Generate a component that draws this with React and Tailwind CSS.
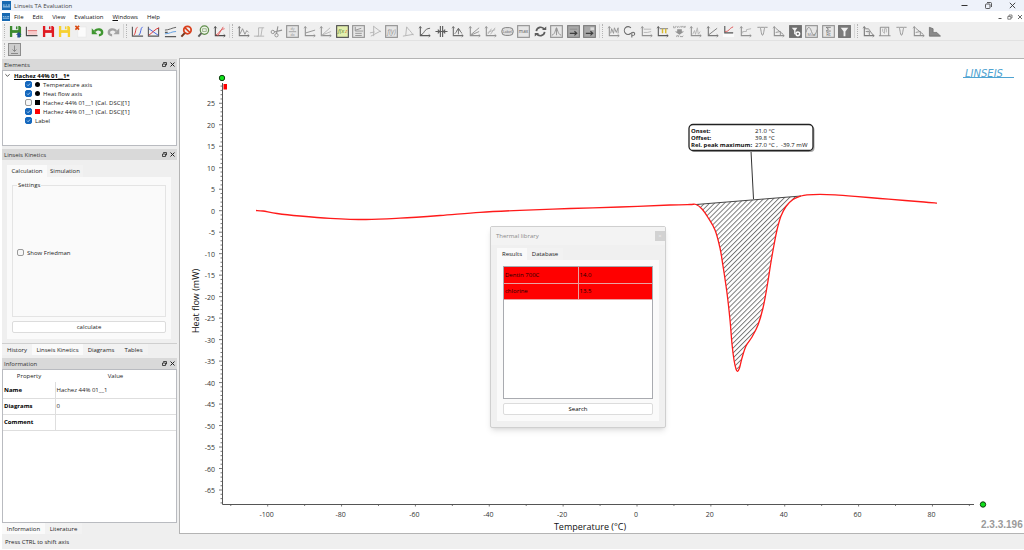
import { useState } from "react";
import { clsx } from "clsx";

/* ---------- toolbar icons (14 x 14) ---------- */

const GREY = "#929292";
const LIGHT = "#b4b4b4";
const DARK = "#5c5c5c";

function Axes({ color = GREY }) {
  return (
    <>
      <path d="M2.5 2v9.5H13" stroke={color} strokeWidth="1.2" />
      <path d="M1 3.5 2.5 1.5 4 3.5M11.5 10 13.2 11.5 11.5 13" stroke={color} strokeWidth="0.8" />
    </>
  );
}

function Floppy({ color, arrow }) {
  return (
    <>
      <path d="M1 1h10.500L13 2.500V13H1z" fill={color} />
      <path d="M3.500 1h6.500v4.500H3.500z" fill="#e9eef0" />
      <path d="M7.500 1.500h1.600v3H7.500z" fill={color} />
      <path d="M3.500 8.500h7V13h-7z" fill="#f3f3f3" />
      {arrow && <path d="M10.500 7.500 13.500 10.500H12v3H9v-3H7.500z" fill="#27508f" />}
    </>
  );
}

function Framed({ fill = "#e6e6e6", stroke = GREY, children }) {
  return (
    <>
      <rect x="0.700" y="0.700" width="12.600" height="12.600" fill={fill} stroke={stroke} strokeWidth="1.200" />
      {children}
    </>
  );
}

function IconText({ x = 7, y = 9, size = 6, fill = GREY, italic, children }) {
  return (
    <text
      x={x}
      y={y}
      fontSize={size}
      fill={fill}
      fontStyle={italic ? "italic" : "normal"}
      textAnchor="middle"
      stroke="none"
    >
      {children}
    </text>
  );
}

const fileIcons = [
  ["Save project", <Floppy color="#3c8a2e" arrow />],
  [
    "Open curve",
    <>
      <path d="M3 6h10v4.500H3z" fill="#f6c9c9" />
      <path d="M3 6h10" stroke="#e07070" />
      <path d="M1.500 2v9.500H13.500" stroke="#4a4a4a" strokeWidth="1.200" />
    </>,
  ],
  ["Save", <Floppy color="#e01b22" />],
  ["Save as", <Floppy color="#f7d030" />],
  [
    "Close file",
    <>
      <path d="M4 2h9v11H4z" fill="#fbfbfb" stroke="#e4e4e4" strokeWidth="0.600" />
      <path d="M1.500 1 5.500 5M5.500 1 1.500 5" stroke="#d9480f" strokeWidth="1.700" />
    </>,
  ],
  [
    "Undo",
    <>
      <path d="M4 6.500C7 3.500 12 4.500 12 8c0 1.800-1.500 3-3.500 3" stroke="#3f9630" strokeWidth="2.600" />
      <path d="M.8 3.500v6.500h6.200z" fill="#3f9630" />
    </>,
  ],
  [
    "Redo",
    <>
      <path d="M10 6.500C7 3.500 2 4.500 2 8c0 1.800 1.500 3 3.500 3" stroke="#a3a3a3" strokeWidth="2.600" />
      <path d="M13.200 3.500v6.500H7z" fill="#a3a3a3" />
    </>,
  ],
];

const viewIcons = [
  [
    "Curves",
    <>
      <path d="M1.500 2v10H13" stroke="#5a5a5a" strokeWidth="1.200" />
      <path d="M3 11C5.500 9 4.500 3 7 2.500" stroke="#e03030" />
      <path d="M8.500 11C11 9 10 3 12.500 2" stroke="#4060e0" />
    </>,
  ],
  [
    "Crossing curves",
    <>
      <path d="M1.500 2v10h11V3" stroke="#5a5a5a" strokeWidth="1.200" />
      <path d="M2 4 12 11" stroke="#4060e0" />
      <path d="M2 11C5 9 9 4 13 3" stroke="#e03030" />
    </>,
  ],
  [
    "Stacked curves",
    <>
      <path d="M1 12.500h12M1 8h3" stroke="#5a5a5a" strokeWidth="1.200" />
      <path d="M1 5.500C5 5.500 9 3 13 2.500" stroke="#5a5a5a" />
      <path d="M1 9.500C6 9.500 8 7 13 7" stroke="#5b9bdf" />
    </>,
  ],
  [
    "Disable zoom",
    <>
      <circle cx="8" cy="5.500" r="4" stroke="#d9411e" strokeWidth="1.900" />
      <path d="M5.200 2.800 10.800 8.200" stroke="#d9411e" strokeWidth="1.700" />
      <path d="M5 8.700 1.500 12.500" stroke="#77371f" strokeWidth="2.200" />
    </>,
  ],
  [
    "Zoom fit",
    <>
      <circle cx="8" cy="5.500" r="4.500" fill="#edf4e7" stroke="#5f8d4a" strokeWidth="1.300" />
      <path d="M6 4h4v3H6z" stroke="#7a9b6b" strokeWidth="0.700" />
      <path d="M4.800 8.700 1.500 12.500" stroke="#5c5c5c" strokeWidth="2" />
    </>,
  ],
  [
    "Tangent",
    <>
      <Axes color="#4a4a4a" />
      <path d="M3 10.500C7 10 6 5 12.500 4M5 12 11 2" stroke="#e05050" strokeWidth="0.900" />
    </>,
  ],
];

const evaluationIcons = [
  ["Peak", <><Axes color="#7a7a7a" /><path d="M3 10 6 4l2.500 6 2-4 2 2" stroke={GREY} /></>],
  ["Step", <path d="M1 12h5V3h6M4 12h8M10 3 8.500 12" stroke={LIGHT} />],
  [
    "Cut",
    <>
      <circle cx="3" cy="7.500" r="1.800" stroke={GREY} />
      <circle cx="7" cy="11" r="1.800" stroke={GREY} />
      <path d="M4.500 7.500 13 5.500M7 9.500 8.500 1.500" stroke={GREY} strokeWidth="1.200" />
    </>,
  ],
  [
    "Derivative",
    <Framed>
      <IconText y={5.500} size={4}>dy</IconText>
      <path d="M3 7.200h8" stroke={GREY} strokeWidth="0.800" />
      <IconText y={12} size={4}>dx</IconText>
    </Framed>,
  ],
  ["Baseline", <><Axes /><path d="M3 8.500 13 5.500" stroke={GREY} /></>],
  ["Slope", <><Axes /><path d="M3 11 12 3M3 11 13 7" stroke={LIGHT} /></>],
  [
    "Function",
    <Framed fill="#e3efae" stroke="#4d4d4d">
      <IconText x={5.500} size={6} fill="#4c7a2a" italic>f(x</IconText>
      <IconText x={11} size={6} fill="#e07a30" italic>z</IconText>
    </Framed>,
  ],
  [
    "Report",
    <Framed>
      <path d="M3.500 2v4.500H12M4 5.500l6-2M3.500 9h7M3.500 11.300h7" stroke={GREY} />
    </Framed>,
  ],
  ["Onset", <path d="M5 1v11M2 12 12.500 6.500M5 1.500l8 6M1 8.500 6 7.500" stroke={LIGHT} />],
  ["Formula", <Framed><IconText size={7} y={9.500} italic>f(y)</IconText></Framed>],
  ["Offset", <path d="M1 12 12.500 10M5 2 4 11.500M5 2c2 3 5 5 7 9" stroke={LIGHT} />],
  ["Glass point", <><Axes color={DARK} /><path d="M3 10.500C7 10 6 4 13 3.500" stroke={DARK} /></>],
  [
    "Shift",
    <>
      <path d="M5.800 1v12M8.200 1v12" stroke={DARK} strokeWidth="1.200" />
      <path d="M.5 7h13M3 5 5 7 3 9M11 5 9 7l2 2" stroke={DARK} strokeWidth="1.300" />
    </>,
  ],
  ["Raise", <><Axes color="#6e6e6e" /><path d="M4 9.500C6 8 7 4 8 4s2 4 4 5M8 10V4M6.500 6 8 3.500 9.500 6" stroke="#6e6e6e" /></>],
  ["Line fit", <><Axes /><path d="M3 10.500 12 3M3 11l9-4" stroke={GREY} /></>],
  ["Parallel", <><Axes /><path d="M4 10 8 4M7 10l5-7M4 8l8-3" stroke={LIGHT} /></>],
  [
    "Label",
    <>
      <rect x="0.800" y="2.800" width="12.400" height="8.400" rx="4" stroke="#7c7c7c" fill="#dedede" />
      <IconText y={8.800} size={4} fill="#666">Label</IconText>
    </>,
  ],
  ["Maximum", <Framed><IconText size={5} y={9} fill="#555">max</IconText></Framed>],
  [
    "Refresh",
    <>
      <path d="M2.500 6.500a4.700 4.700 0 0 1 8.700-1.700M11.500 7.500a4.700 4.700 0 0 1-8.700 1.700" stroke={DARK} strokeWidth="1.800" />
      <path d="M8.500 5.500h4.700V1.500zM5.500 8.500H.8v4z" fill={DARK} />
    </>,
  ],
  ["Distribution", <Framed><path d="M2 11C6 10 6 3 7 3s1 7 5 8M7 3v8" stroke={GREY} /></Framed>],
  [
    "Export",
    <Framed fill="#a9a9a9" stroke="#7b7b7b">
      <path d="M3 4.500h8" stroke="#8a8a8a" />
      <path d="M3 9h7M8 6.800 10.500 9 8 11.200" stroke="#3f3f3f" strokeWidth="1.300" />
    </Framed>,
  ],
  [
    "Export all",
    <Framed fill="#a9a9a9" stroke="#7b7b7b">
      <path d="M8 2.500h4v3H8z" fill="#dcdcdc" />
      <path d="M3 9h7M8 6.800 10.500 9 8 11.200" stroke="#3f3f3f" strokeWidth="1.300" />
    </Framed>,
  ],
];

const dscIcons = [
  ["Compare", <><Axes /><path d="M4 9l1-5 2 5 1-6 2 5 2-5v6" stroke={GREY} /></>],
  [
    "Heat capacity",
    <>
      <path d="M8.500 3.200A4 4.300 0 1 0 8.500 8.800" stroke="#6b6b6b" strokeWidth="1.200" />
      <path d="M9.500 13.500V7.500M9.500 8.200c3.500-1.500 4.500 3.300.5 3.300" stroke="#6b6b6b" strokeWidth="1.100" />
    </>,
  ],
  ["Plateau", <><Axes /><path d="M4 4.500h8M4 8h4l4-1" stroke={LIGHT} /></>],
  [
    "Marker",
    <>
      <Axes color={DARK} />
      <path d="M4 4h9" stroke="#7a7a7a" />
      <path d="M7 9V4M10.500 4v5" stroke="#d8b92b" strokeWidth="1.500" />
    </>,
  ],
  [
    "Convert to mW",
    <>
      <path d="M0.500 1v2h2V1M4 1l1 2 1-2M7 3l1-2M9 3V1.500h2V3M12 1l.700 2 .800-2" stroke={GREY} strokeWidth="0.700" />
      <path d="M4.500 4.500h5v2.500H12L7 10.500 2 7h2.500z" fill={GREY} />
      <path d="M4 13v-1.500h2V13M7.500 11.500l1 1.500.700-1 .700 1 1-1.500" stroke={GREY} strokeWidth="0.800" />
    </>,
  ],
  ["Peaks", <><Axes /><path d="M4 10l2-4 1 4 2-7 1 7 2-3" stroke={LIGHT} /></>],
  ["Rise", <><Axes color="#7a7a7a" /><path d="M3 10.500 12 3.500" stroke="#7a7a7a" /></>],
  [
    "Curve correction",
    <>
      <path d="M1 9h12v4H1z" fill="#fafafa" />
      <path d="M3 1v7.500h9" stroke="#555" strokeWidth="1.200" />
      <path d="M3.500 7C8 7 7 4 12 2" stroke="#e04848" />
    </>,
  ],
  ["Steps", <><Axes /><path d="M4 9V7h4V5l5-1" stroke={LIGHT} /></>],
  ["Valley", <path d="M1.500 2.500h2.500c1.500 0 1.500 8.500 3 8.500s1.500-8.500 3-8.500h2.500M4.500 2.500h5" stroke={GREY} />],
  ["Decay", <><Axes /><path d="M4 3.500 12 10M4 8l5-1v4" stroke={GREY} /></>],
  [
    "Filter settings",
    <Framed fill="#6f6f6f" stroke="#6f6f6f">
      <path d="M3 3h6L7 6v4H5.500V6z" fill="#f0f0f0" />
      <circle cx="9.500" cy="9.500" r="2" stroke="#fff" strokeWidth="1.500" />
    </Framed>,
  ],
  [
    "Modulation",
    <Framed>
      <path d="M1 8C3 1 5 1 7 7s4 5 6-2" stroke={GREY} />
      <IconText y={12.300} size={4} fill="#777">Mod</IconText>
    </Framed>,
  ],
  [
    "Sum",
    <Framed>
      <path d="M9.500 2.500h-5L7 4.500 4.500 6.500h5" stroke="#666" strokeWidth="0.800" />
      <IconText y={12} size={5} fill="#666">Rt</IconText>
    </Framed>,
  ],
  ["Filter", <Framed fill="#7b7b7b" stroke="#6f6f6f"><path d="M3 3h8L8 7v5H6V7z" fill="#f0f0f0" /></Framed>],
];

const kineticIcons = [
  ["Area", <><Axes color="#7a7a7a" /><path d="M3 4h4l5 7M4 7h4v4" stroke={GREY} fill="#dadada" /></>],
  ["Window", <><path d="M2.500 2.500h9v9M2.500 2.500v9M1 11.500h12.500" stroke={GREY} strokeWidth="1.100" /><path d="M5 4v3l2 2V4h2v4" stroke={LIGHT} /></>],
  ["Minimum", <path d="M1.500 2.500h2.500c1.500 0 1.500 8.500 3 8.500s1.500-8.500 3-8.500h2.500M4.500 2.500h5" stroke={GREY} />],
  ["Falloff", <><Axes /><path d="M4 3.500 12 10M4 8l5-1v4" stroke={GREY} /></>],
  ["Filled area", <path d="M1.500 12V2.500l4 1.500v4h4l4 4z" fill="#8a8a8a" stroke="#6b6b6b" strokeWidth="0.800" />],
];

function ToolGroup({ icons, className, last = false }) {
  return (
    <div className={clsx("flex items-center", !last && "border-r border-[#d6d6d6] pr-px")}>
      <div className="mx-0.5 h-3.5 w-px border-l border-dotted border-[#b5b5b5]" />
      <div className={clsx("flex", className)}>
        {icons.map(([label, icon]) => (
          <button key={label} type="button" title={label} aria-label={label} className="flex min-w-0 flex-1 justify-center">
            <svg viewBox="0 0 14 14" className="size-[13px] shrink-0" fill="none">
              {icon}
            </svg>
          </button>
        ))}
      </div>
    </div>
  );
}

function AppIcon({ className }) {
  return (
    <svg viewBox="0 0 10 10" className={className}>
      <rect width="10" height="10" fill="#1668b1" />
      <path d="M1 4.500h2M4 4.500h1.500M6.500 4.500H9M1 6.500h8" stroke="#bcdcf4" strokeWidth="1" />
    </svg>
  );
}

/* ---------- window chrome ---------- */

function TitleBar() {
  return (
    <header className="flex h-[11px] items-center bg-[#eef2fa] pr-2 pl-0.5">
      <AppIcon className="size-[9px]" />
      <h1 className="ml-[3px] flex-1 text-[#444]">Linseis TA Evaluation</h1>
      <div className="flex items-center gap-[17px]">
        <button type="button" aria-label="Minimize">
          <svg viewBox="0 0 7 7" className="size-[7px]"><path d="M0.500 3.500h6" stroke="#333" /></svg>
        </button>
        <button type="button" aria-label="Restore">
          <svg viewBox="0 0 7 7" className="size-[7px]" fill="none" stroke="#333" strokeWidth="0.800">
            <rect x="0.500" y="2" width="4.500" height="4.500" rx="0.800" />
            <path d="M2 .5h3.500a1 1 0 0 1 1 1V5" />
          </svg>
        </button>
        <button type="button" aria-label="Close">
          <svg viewBox="0 0 7 7" className="size-[7px]"><path d="M.8.8l5.400 5.400M6.200.8.8 6.200" stroke="#333" strokeWidth="0.900" /></svg>
        </button>
      </div>
    </header>
  );
}

function MenuBar() {
  return (
    <nav className="flex h-[11px] items-center bg-white pr-px pl-0.5">
      <AppIcon className="size-[8px]" />
      <div className="ml-1 flex flex-1 gap-[9px] text-[#111]">
        <button type="button">File</button>
        <button type="button">Edit</button>
        <button type="button">View</button>
        <button type="button">Evaluation</button>
        <button type="button"><span className="underline">W</span>indows</button>
        <button type="button">Help</button>
      </div>
      <div className="flex gap-1">
        <button type="button" aria-label="Minimize document">
          <svg viewBox="0 0 6 6" className="size-[6px]"><path d="M1.500 4.500h3" stroke="#555" /></svg>
        </button>
        <button type="button" aria-label="Restore document">
          <svg viewBox="0 0 6 6" className="size-[6px]" fill="none"><path d="M.8 2.500h3v2.700h-3zM2 2.300V1h3v3H4" stroke="#555" strokeWidth="0.700" /></svg>
        </button>
        <button type="button" aria-label="Close document">
          <svg viewBox="0 0 6 6" className="size-[6px]"><path d="M1 1l4 4M5 1 1 5" stroke="#444" strokeWidth="0.800" /></svg>
        </button>
      </div>
    </nav>
  );
}

/* ---------- left docks ---------- */

function DockTitle({ children }) {
  return (
    <div className="flex h-[11px] items-center bg-[#d9d9d9] px-0.5 text-[#333]">
      <h2 className="flex-1">{children}</h2>
      <button type="button" aria-label="Float panel" className="mr-[3px]">
        <svg viewBox="0 0 5 5" className="size-[5px]" fill="none" stroke="#222" strokeWidth="0.800">
          <path d="M.5 2h3v2.500h-3zM1.500 1.500V.5h3v2.500H4" />
        </svg>
      </button>
      <button type="button" aria-label="Close panel">
        <svg viewBox="0 0 5 5" className="size-[5px]"><path d="M.5.5l4 4M4.500.5l-4 4" stroke="#222" /></svg>
      </button>
    </div>
  );
}

function CheckBox({ checked = false }) {
  return (
    <span className="grid size-[7px] shrink-0">
      <input
        type="checkbox"
        defaultChecked={checked}
        className="peer col-start-1 row-start-1 size-[7px] appearance-none rounded-[2px] border border-[#9a9a9a] bg-[#f7f7f7] checked:border-[#1467bd] checked:bg-[#1467bd]"
      />
      <svg
        viewBox="0 0 7 7"
        fill="none"
        className="pointer-events-none invisible col-start-1 row-start-1 size-[7px] peer-checked:visible"
      >
        <path d="M2 3.600 3.100 4.700 5.100 2.500" stroke="#cfe3f6" strokeWidth="0.800" />
      </svg>
    </span>
  );
}

const elements = [
  { label: "Temperature axis", checked: true, marker: "rounded-full bg-black" },
  { label: "Heat flow axis", checked: true, marker: "rounded-full bg-black" },
  { label: "Hachez 44% 01__1 (Cal. DSC)[1]", checked: false, marker: "bg-black" },
  { label: "Hachez 44% 01__1 (Cal. DSC)[1]", checked: true, marker: "bg-[#ff0000]" },
  { label: "Label", checked: true },
];

function ElementsDock() {
  return (
    <section>
      <DockTitle>Elements</DockTitle>
      <div className="h-[76px] border border-[#b9bbc0] bg-white">
        <button type="button" className="flex h-[9px] items-center pl-0.5">
          <svg viewBox="0 0 6 6" className="mr-1 size-[5px]" fill="none"><path d="M.5 1.500 3 4l2.500-2.500" stroke="#333" /></svg>
          <span className="font-bold text-black underline">Hachez 44% 01__1*</span>
        </button>
        <ul className="pl-[22px]">
          {elements.map((el, i) => (
            <li key={i}>
              <label className="flex h-[9px] items-center gap-[3px] whitespace-nowrap">
                <CheckBox checked={el.checked} />
                {el.marker && <span className={clsx("size-[5px] shrink-0", el.marker)} />}
                {el.label}
              </label>
            </li>
          ))}
        </ul>
      </div>
    </section>
  );
}

function Tab({ active, onClick, className, children }) {
  return (
    <button
      type="button"
      role="tab"
      aria-selected={active}
      onClick={onClick}
      className={clsx("h-full whitespace-nowrap", className, active ? "bg-[#fafafa]" : "bg-[#f2f2f2]")}
    >
      {children}
    </button>
  );
}

function KineticsDock() {
  const [tab, setTab] = useState("Calculation");
  const [dock, setDock] = useState("Linseis Kinetics");

  return (
    <section>
      <DockTitle>Linseis Kinetics</DockTitle>
      <div className="pt-[5px] pr-1.5 pb-1 pl-[5px]">
        <div role="tablist" className="flex h-3">
          <Tab className="w-10" active={tab === "Calculation"} onClick={() => setTab("Calculation")}>Calculation</Tab>
          <Tab className="w-9" active={tab === "Simulation"} onClick={() => setTab("Simulation")}>Simulation</Tab>
        </div>
        <div className="bg-[#fafafa] px-[5px] pt-1 pb-1.5">
          <fieldset className="flex h-[136px] items-center border border-[#e4e4e4] pl-1">
            <legend className="px-px">Settings</legend>
            <label className="flex items-center gap-[3px]">
              <CheckBox />
              Show Friedman
            </label>
          </fieldset>
          <button type="button" className="mt-1 block h-3 w-full rounded-[2px] border border-[#dcdcdc] bg-white">
            calculate
          </button>
        </div>
      </div>
      <div role="tablist" className="flex h-3 border-t border-[#cfcfcf]">
        {[
          ["History", "w-[30px]"],
          ["Linseis Kinetics", "w-[51px]"],
          ["Diagrams", "w-9"],
          ["Tables", "w-[29px]"],
        ].map(([name, width]) => (
          <Tab key={name} className={width} active={dock === name} onClick={() => setDock(name)}>{name}</Tab>
        ))}
      </div>
    </section>
  );
}

const information = [
  ["Name", "Hachez 44% 01__1"],
  ["Diagrams", "0"],
  ["Comment", ""],
];

function InformationDock() {
  const [tab, setTab] = useState("Information");

  return (
    <section className="flex flex-1 flex-col">
      <DockTitle>Information</DockTitle>
      <div className="flex-1 border border-[#b9bbc0] bg-white">
        <table className="w-full table-fixed text-left">
          <thead>
            <tr className="h-3">
              <th className="w-[52px] text-center font-normal">Property</th>
              <th className="text-center font-normal">Value</th>
            </tr>
          </thead>
          <tbody>
            {information.map(([property, value]) => (
              <tr key={property} className="h-4 border-b border-[#dedede]">
                <th className="border-r border-[#dedede] pl-px font-bold text-black">{property}</th>
                <td className="pl-px">{value}</td>
              </tr>
            ))}
          </tbody>
        </table>
      </div>
      <div role="tablist" className="flex h-[11px]">
        <Tab className="w-[43px]" active={tab === "Information"} onClick={() => setTab("Information")}>Information</Tab>
        <Tab className="w-[37px]" active={tab === "Literature"} onClick={() => setTab("Literature")}>Literature</Tab>
      </div>
    </section>
  );
}

/* ---------- diagram ---------- */

const toX = (temperature) => 457 + temperature * 3.693;
const toY = (heatFlow) => 151.7 - heatFlow * 4.297;

const range = (from, to, step) =>
  Array.from({ length: Math.floor((to - from) / step) + 1 }, (_, i) => from + i * step);

const before = [
  [76, 151.500], [83, 152], [97, 154.500], [120, 157], [150, 159.300], [186, 160.500], [220, 159.200],
  [260, 156.500], [300, 153.300], [340, 151.300], [390, 149.500], [440, 148], [490, 146], [510, 145.500],
];
const peak = [
  [516, 145.500], [522, 150], [528, 158.500], [535, 171], [540, 189], [543, 207], [547, 234], [550, 261],
  [552, 285], [554, 301], [556, 310], [557.500, 312.300], [559.500, 309], [562, 299], [566, 287], [572, 278],
  [578, 266], [583, 249], [587, 228], [591, 203], [594, 186], [597, 171], [601, 157], [606, 147.500],
  [613, 140.500], [621, 137],
];
const after = [
  [627, 135.800], [640, 135.300], [655, 135.800], [675, 137.300], [700, 139.500], [725, 141.500], [744, 143], [757, 144.200],
];

// Catmull-Rom spline through the measured points
function spline(points) {
  return points.reduce((d, p, i) => {
    if (i === 0) return `M${p[0]} ${p[1]}`;
    const a = points[i - 2] || points[i - 1];
    const b = points[i - 1];
    const c = points[i + 1] || p;
    return (
      d +
      `C${b[0] + (p[0] - a[0]) / 6} ${b[1] + (p[1] - a[1]) / 6} ` +
      `${p[0] - (c[0] - b[0]) / 6} ${p[1] - (c[1] - b[1]) / 6} ${p[0]} ${p[1]}`
    );
  }, "");
}

function Diagram() {
  return (
    <svg viewBox="0 0 844 474" className="block w-full" role="img" aria-label="Heat flow over temperature">
      <defs>
        <pattern id="hatch" width="3.5" height="3.5" patternUnits="userSpaceOnUse" patternTransform="rotate(45)">
          <path d="M0.500 0v3.500" stroke="#444" strokeWidth="0.700" />
        </pattern>
      </defs>

      {/* Axes */}
      <g stroke="#555">
        <path d="M42.500 24v421.500H794" fill="none" />
        {range(-68, 29, 1).map((v) => (
          <path key={v} d={`M42 ${toY(v)}h${v % 5 === 0 ? -3 : -1.500}`} strokeWidth="0.800" />
        ))}
        {range(-110, 90, 10).map((t) => (
          <path key={t} d={`M${toX(t)} 445v${t % 20 === 0 ? 2.500 : 2}`} strokeWidth="0.800" />
        ))}
      </g>
      <g fontSize="7" fill="#333">
        {range(-65, 25, 5).map((v) => (
          <text key={v} x="35" y={toY(v) + 3} textAnchor="end">{v}</text>
        ))}
        {range(-100, 80, 20).map((t) => (
          <text key={t} x={toX(t) - 1} y="458" textAnchor="middle">{t}</text>
        ))}
      </g>
      <g fontSize="9" fill="#111">
        <text x="410" y="471" textAnchor="middle">Temperature (°C)</text>
        <text x="19" y="242" textAnchor="middle" transform="rotate(-90 19 242)">Heat flow (mW)</text>
      </g>
      <g fill="#0fe01a" stroke="#123d12">
        <circle cx="42" cy="19" r="2.700" />
        <circle cx="803" cy="445.500" r="2.700" />
      </g>
      <rect x="43.500" y="25" width="3.500" height="5.500" fill="#f00" />

      {/* Peak area and measured curve */}
      <path d={spline(peak) + "Z"} fill="url(#hatch)" />
      <path d="M516 145.500 621 137" stroke="#333" strokeWidth="0.900" />
      <path d={spline([...before, ...peak, ...after])} fill="none" stroke="#ff1a1a" strokeWidth="1.300" />

      {/* Peak label */}
      <path d="M571 92 573.500 140" stroke="#333" />
      <rect x="510.500" y="67" width="124" height="26" rx="4" fill="#a8a8a8" />
      <rect x="509" y="65.500" width="124" height="26" rx="4" fill="#fff" stroke="#222" strokeWidth="1.300" />
      <g fontSize="6" fill="#111">
        <g fontWeight="bold">
          <text x="511" y="74">Onset:</text>
          <text x="511" y="81">Offset:</text>
          <text x="511" y="88">Rel. peak maximum:</text>
        </g>
        <text x="575" y="74">21.0 °C</text>
        <text x="575" y="81">39.8 °C</text>
        <text x="575" y="88">27.0 °C ,&nbsp; -39.7 mW</text>
      </g>

      {/* Brand and version */}
      <text x="785" y="18" fontSize="10" fontFamily="DejaVu Sans" fontStyle="italic" fill="#4fa3d1">LINSEIS</text>
      <path d="M783 18.500h51" stroke="#4fa3d1" />
      <text x="801" y="469" fontSize="10" fontFamily="Liberation Sans" fontWeight="bold" fill="#9a9a9a">2.3.3.196</text>
    </svg>
  );
}

function ThermalLibrary() {
  const [tab, setTab] = useState("Results");

  return (
    <div
      role="dialog"
      aria-label="Thermal library"
      className="absolute top-[167px] left-[310px] w-44 rounded-[2px] border border-[#cfcfcf] bg-[#f0f0f0] shadow-md"
    >
      <div className="flex h-[18px] items-center bg-[#f3f3f3] pl-[5px] text-[#8a8a8a]">
        <h2 className="flex-1">Thermal library</h2>
        <button type="button" aria-label="Close" className="size-2.5 bg-[#d2d2d2] text-[#eee]">×</button>
      </div>
      <div className="px-1.5 pt-[3px] pb-1.5">
        <div role="tablist" className="flex h-3">
          <Tab className="w-[30px]" active={tab === "Results"} onClick={() => setTab("Results")}>Results</Tab>
          <Tab className="w-9" active={tab === "Database"} onClick={() => setTab("Database")}>Database</Tab>
        </div>
        <div className="bg-[#fafafa] p-1.5">
          <div className="h-[133px] border border-[#a9abb0] bg-white">
            <table className="w-full table-fixed text-[#200000]">
              <tbody>
                {[["Dentin 700C", "14.0"], ["chlorine", "13.5"]].map(([name, score]) => (
                  <tr key={name} className="h-4 border-b border-[#e9a0a0] bg-[#ff0000]">
                    <td className="border-r border-[#e9a0a0] pl-px">{name}</td>
                    <td className="pl-px">{score}</td>
                  </tr>
                ))}
              </tbody>
            </table>
          </div>
          <button type="button" className="mt-1 block h-3 w-full rounded-[2px] border border-[#dcdcdc] bg-white text-black">
            Search
          </button>
        </div>
      </div>
    </div>
  );
}

export default function App() {
  return (
    <div className="flex min-h-screen flex-col bg-white pb-px font-['Open_Sans','Noto_Sans',sans-serif] text-[6px] leading-[8px] text-[#222]">
      <TitleBar />
      <MenuBar />

      <div className="ml-0.5 bg-[#efefef]">
        <div className="flex h-[19px] items-center border-b border-[#e2e2e2]">
          <ToolGroup icons={fileIcons} className="w-[115px]" />
          <ToolGroup icons={viewIcons} className="w-[99px]" />
          <ToolGroup icons={evaluationIcons} className="w-[363px]" />
          <ToolGroup icons={dscIcons} className="w-[248px]" />
          <ToolGroup icons={kineticIcons} className="w-[83px]" last />
        </div>
        <div className="flex h-[17px] items-center">
          <div className="mx-0.5 h-3.5 w-px border-l border-dotted border-[#b5b5b5]" />
          <button type="button" aria-label="Pin axis" className="ml-px">
            <svg viewBox="0 0 13 13" className="size-[13px]" fill="none">
              <rect x="0.500" y="0.500" width="12" height="12" fill="#cdcdcd" stroke="#8d8d8d" />
              <path d="M6.500 2.500v6M4.500 6.500l2 2 2-2M3 10.500h7" stroke="#8a8a8a" />
            </svg>
          </button>
        </div>
      </div>

      <div className="ml-0.5 flex flex-1 bg-[#efefef]">
        <aside className="mr-0.5 flex w-[175px] shrink-0 flex-col gap-[3px] pt-px">
          <ElementsDock />
          <KineticsDock />
          <InformationDock />
        </aside>
        <main className="relative min-w-0 flex-1 border-y border-l border-[#b4b4b4] bg-white">
          <Diagram />
          <ThermalLibrary />
        </main>
      </div>

      <footer className="ml-0.5 flex h-[15px] items-center bg-[#efefef] pl-[3px]">Press CTRL to shift axis</footer>
    </div>
  );
}
